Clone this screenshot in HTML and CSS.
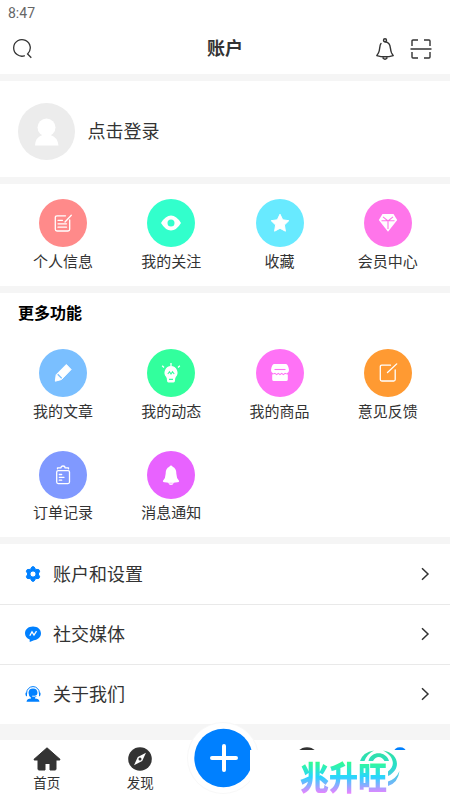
FILE: index.html
```html
<!DOCTYPE html>
<html lang="zh-CN">
<head>
<meta charset="utf-8">
<title>账户</title>
<link rel="stylesheet" href="styles.css">
</head>
<body>
<div class="app">
  <div class="status">8:47</div>
  <header class="header">
    <svg class="search" width="22" height="22" viewBox="0 0 22 22" fill="none" stroke="#333" stroke-width="1.3"><path d="M12.8 17.7A8.3 8.3 0 1 1 15.6 16L19.3 19.8"/></svg>
    <h1>账户</h1>
    <div class="actions">
      <svg width="20" height="24" viewBox="0 0 20 24" fill="none" stroke="#333" stroke-width="1.4" stroke-linecap="round" stroke-linejoin="round"><circle cx="10" cy="3.2" r="1.5"/><path d="M6 6.5C4.2 8.2 5.2 13.5 3.4 16L1.8 18.6Q10 21 18.2 18.6L16.6 16C15 13 15.9 8.9 14 6.7Q12.6 5 10 4.8M8 21Q10 23.4 12 21"/></svg>
      <svg width="22" height="22" viewBox="0 0 22 22" fill="none" stroke="#333" stroke-width="1.4"><path d="M2 8V3Q2 2 3 2H8M14 2H19Q20 2 20 3V8M2 14V19Q2 20 3 20H8M14 20H19Q20 20 20 19V14M.5 11H21.5"/></svg>
    </div>
  </header>
  <section class="profile">
    <svg width="57" height="57" viewBox="0 0 57 57"><circle cx="28.5" cy="28.5" r="28.5" fill="#ececec"/><circle cx="28.5" cy="24.5" r="9" fill="#fff"/><path d="M17 42.5Q17.5 34 24.5 32H32.5Q39.5 34 40.5 42.5Z" fill="#fff"/></svg>
    <span>点击登录</span>
  </section>
  <section class="grid quick">
    <div class="item"><i class="dot coral"><svg viewBox="0 0 20 20" class="line"><path d="M12.5 2.8H4Q2.3 2.8 2.3 4.5V16.3Q2.3 18 4 18H15Q16.7 18 16.7 16.3V7M12 9L18.3 2.2M5 7.3H9.5M5 10.8H13.5M5 14.2H13.5"/></svg></i><span>个人信息</span></div>
    <div class="item"><i class="dot teal"><svg viewBox="0 0 20 20" class="solid"><path fill-rule="evenodd" d="M0 10Q4.5 2.5 10 2.5T20 10Q15.5 17.5 10 17.5T0 10ZM10 6.5A3.5 3.5 0 1 0 10 13.5A3.5 3.5 0 1 0 10 6.5"/></svg></i><span>我的关注</span></div>
    <div class="item"><i class="dot cyan"><svg viewBox="0 0 20 20" class="solid star"><path d="M10 1.2L12.7 6.8L18.8 7.7L14.4 12L15.4 18.2L10 15.3L4.6 18.2L5.6 12L1.2 7.7L7.3 6.8Z"/></svg></i><span>收藏</span></div>
    <div class="item"><i class="dot pink"><svg viewBox="0 0 20 20"><path fill="#fff" d="M4.5 1H15.5L19.2 7L10 18.8L.8 7Z"/><path d="M5 3.8L10 8L15 3.8M3.5 7.8H16.5M10 8V16" fill="none" stroke="#ff75ea" stroke-width="1.1"/></svg></i><span>会员中心</span></div>
  </section>
  <section class="more">
    <h2>更多功能</h2>
    <div class="grid">
      <div class="item"><i class="dot blue"><svg viewBox="0 0 20 20"><path fill="#fff" stroke="#fff" stroke-linejoin="round" d="M13.3 1.5L18.1 6.5L8.5 16.5L2.3 18.2L3.2 11.7Z"/><path d="M4.7 11.3L8.7 15.2" stroke="#7abfff" stroke-width="1.2" fill="none"/></svg></i><span>我的文章</span></div>
      <div class="item"><i class="dot green"><svg viewBox="0 0 20 20"><path fill="#fff" d="M10 3A6.6 6.6 0 0 1 14.8 14Q14 15 14 17.5Q14 19.5 12.5 19.5H7.5Q6 19.5 6 17.5Q6 15 5.2 14A6.6 6.6 0 0 1 10 3"/><path d="M10 0V3M1.2 2.8L3 4.5M18.8 2.8L17 4.5" stroke="#fff" stroke-width="1.3"/><path d="M6.8 11L8.5 8.7L10 11L11.5 8.7L13.2 11M8 16.4H12" stroke="#32ff9d" stroke-width="1.1" fill="none"/></svg></i><span>我的动态</span></div>
      <div class="item"><i class="dot magenta"><svg viewBox="0 0 20 20"><path fill="#fff" d="M4 1H16Q18.2 1.5 19 7Q19 10 16.7 10.5L15 9.8L13.4 11L11.7 9.8L10 11L8.3 9.8L6.6 11L5 9.8L3.3 10.5Q1 10 1 7Q1.8 1.5 4 1ZM2.2 11.5L5 11L6.6 12.3L8.3 11L10 12.3L11.7 11L13.4 12.3L15 11L17.8 11.5V16.5Q17.8 18 16 18H4Q2.2 18 2.2 16.5Z"/><path d="M4.5 6.5H15.5" stroke="#ff72f6" stroke-width="1.1"/></svg></i><span>我的商品</span></div>
      <div class="item"><i class="dot orange"><svg viewBox="0 0 20 20" class="line"><path d="M12.5 2.2H3.8Q2.3 2.2 2.3 3.7V16.5Q2.3 18 3.8 18H15.7Q17.2 18 17.2 16.5V6.8M9.5 9.5L18.7.9"/></svg></i><span>意见反馈</span></div>
      <div class="item"><i class="dot indigo"><svg viewBox="0 0 20 20" class="line"><rect x="3.7" y="5.6" width="12.8" height="13" rx="1.5"/><path d="M4.5 3.8V2.8H8M15.5 3.8V2.8H12M8 2.8Q8 1 10 1T12 2.8M6.3 9.5H8.7M6.3 12.3H11M6.3 15.2H8.7"/></svg></i><span>订单记录</span></div>
      <div class="item"><i class="dot violet"><svg viewBox="0 0 20 20" class="solid"><path d="M8.3 1.7Q10-.5 11.7 1.7Q15.5 3.5 15.3 8.5Q15.4 13 18 15.7Q18.5 17 16.5 17.2Q14 17.5 12.7 17.7Q12.2 20 10 20T7.3 17.7Q6 17.5 3.5 17.2Q1.5 17 2 15.7Q4.6 13 4.7 8.5Q4.5 3.5 8.3 1.7"/><path d="M8.3 18.2H11.7" stroke="#e862ff" stroke-width=".5"/></svg></i><span>消息通知</span></div>
    </div>
  </section>
  <section class="rows">
    <div class="row"><svg class="lead" viewBox="0 0 16 16"><path fill="#0080ff" fill-rule="evenodd" stroke="#0080ff" stroke-linejoin="round" d="M7 .8H9L10.600 3.400L13.700 3.500L14.700 5.200L13.200 8L14.700 10.800L13.700 12.500L10.600 12.600L9 15.200H7L5.400 12.600L2.300 12.500L1.300 10.800L2.800 8L1.300 5.200L2.300 3.500L5.400 3.400ZM8 4.900A3.100 3.100 0 1 0 8 11.100A3.100 3.100 0 1 0 8 4.900"/></svg><span>账户和设置</span><svg class="chev" viewBox="0 0 10 14"><path d="M2 1.2L8 7L2 12.8"/></svg></div>
    <div class="row"><svg class="lead" viewBox="0 0 16 16"><path fill="#0080ff" d="M8 .5C12.7.5 16 3.4 16 7.3S12.9 13.8 9 14.2L4.7 16V13.6C1.7 12.5 0 10 0 7.3C0 3.4 3.3.5 8 .5"/><path d="M4.8 9.8L7 5.8L9 9L11.5 5.2" fill="none" stroke="#fff" stroke-width="1.3"/></svg><span>社交媒体</span><svg class="chev" viewBox="0 0 10 14"><path d="M2 1.2L8 7L2 12.8"/></svg></div>
    <div class="row"><svg class="lead" viewBox="0 0 16 16"><path d="M1.6 8V7A6.4 6.4 0 0 1 14.4 7V8" fill="none" stroke="#0080ff" stroke-width="1"/><path fill="#0080ff" d="M.5 6.8H2V10.5Q.5 10 .5 8.8ZM15.5 6.8H14V10.5Q15.5 10 15.5 8.8ZM8 2.5A4.5 4.5 0 0 1 12.5 6.8Q12.4 10.3 10 11.7V12.5Q14 12.5 14.5 15.8H1.5Q2 12.5 6 12.5V11.7Q3.5 10 3.5 6.8A4.5 4.5 0 0 1 8 2.5"/><path d="M7.2 10.2Q10 11 12.7 8.8" stroke="#fff" fill="none" stroke-width=".9"/></svg><span>关于我们</span><svg class="chev" viewBox="0 0 10 14"><path d="M2 1.2L8 7L2 12.8"/></svg></div>
  </section>
  <nav class="tabs">
    <div class="tab"><svg width="28" height="24" viewBox="0 0 28 24" fill="#333"><path stroke="#333" stroke-linejoin="round" d="M14 .8L27 12.3Q27.3 13 26.5 13H23V22Q23 23 22 23H17V16.5H12V23H6Q5 23 5 22V13H1.5Q.7 13 1 12.3Z"/></svg><span>首页</span></div>
    <div class="tab"><svg width="24" height="24" viewBox="0 0 24 24"><circle cx="12" cy="12" r="11.8" fill="#333"/><path fill="#fff" fill-rule="evenodd" d="M18 5.8L14.2 14L6 18.2L9.8 10ZM12 10.5A1.5 1.5 0 1 0 12 13.5A1.5 1.5 0 1 0 12 10.5"/></svg><span>发现</span></div>
    <div class="add"><svg width="72" height="72" viewBox="0 0 72 72"><circle cx="36" cy="36" r="35.5" fill="#fff" stroke="#f8f8f8"/><circle cx="36.5" cy="36" r="29.2" fill="#0080ff"/><path d="M37 24V48M25 36H49" stroke="#fff" stroke-width="4" stroke-linecap="round"/></svg></div>
    <div class="tab"><svg width="24" height="24" viewBox="0 0 24 24"><circle cx="12" cy="12" r="11.8" fill="#333"/></svg></div>
    <div class="tab"><svg width="24" height="24" viewBox="0 0 24 24"><path fill="#0080ff" d="M12 .2Q17.5.2 19 6V12H5V6Q6.5.2 12 .2"/></svg></div>
    <div class="brand">
      <svg class="waves" width="42" height="38" viewBox="0 0 42 38">
        <defs><linearGradient id="wave" gradientUnits="userSpaceOnUse" x1="0" y1="0" x2="0" y2="36"><stop stop-color="#32e0a0"/><stop offset=".45" stop-color="#28dfca"/><stop offset="1" stop-color="#7bb0ff"/></linearGradient></defs>
        <g fill="url(#wave)"><path d="M1 11Q4 2 15 .5Q8 4 5.5 11Z"/><path d="M9.500 11C12 .8 27 .8 30 11H25.500C22.500 5.500 17 5.500 14 11Z"/><path d="M24 .5C40 3 43 19 29 26V21.5C37 16 35 6 24 .5Z"/><path d="M40.5 21Q39 33 29 36V31.5Q37 29 40.5 21Z"/></g>
      </svg>
      <b>兆升旺</b>
    </div>
  </nav>
</div>
</body>
</html>
```
FILE: styles.css
```css
* { box-sizing: border-box; }
body { margin: 0; font-family: "Noto Sans CJK SC", sans-serif; color: #333; }
.app { width: 450px; height: 800px; background: #f5f5f5; overflow: hidden; display: flex; flex-direction: column; }
svg { display: block; flex: none; }
.status { height: 26px; padding-left: 8px; background: #fff; font: 14px/26px Roboto, sans-serif; color: #666; }
.header { height: 48px; background: #fff; display: grid; grid-template-columns: 1fr auto 1fr; align-items: center; padding: 0 18px 2px 12px; }
.header h1 { margin: 0 0 4px 6px; font-size: 18px; line-height: 24px; font-weight: 700; }
.actions { display: flex; justify-content: flex-end; align-items: center; gap: 15px; }
.profile { margin-top: 7px; height: 96px; background: #fff; display: flex; align-items: center; gap: 12.5px; padding: 5px 18px 0; font-size: 18px; }
.profile span { margin-top: -3px; }
.grid { display: grid; grid-template-columns: repeat(4, 1fr); padding: 0 8px 0 9px; row-gap: 29px; }
.quick { margin-top: 7px; height: 102px; padding-top: 15px; background: #fff; }
.item { height: 72.5px; display: flex; flex-direction: column; align-items: center; gap: 2.5px; font-size: 15px; line-height: 22px; }
.dot { width: 48px; height: 48px; flex: none; border-radius: 50%; display: flex; align-items: center; justify-content: center; }
.dot svg { width: 20px; height: 20px; }
.line { fill: none; stroke: #fff; stroke-width: 1.3; stroke-linecap: round; stroke-linejoin: round; }
.solid { fill: #fff; }
.star { stroke: #fff; stroke-linejoin: round; }
.coral { background: #ff8a8a; }
.teal { background: #32ffcc; }
.cyan { background: #68eaff; }
.pink { background: #ff75ea; }
.blue { background: #7abfff; }
.green { background: #32ff9d; }
.magenta { background: #ff72f6; }
.orange { background: #ff9a32; }
.indigo { background: #8099ff; }
.violet { background: #e862ff; }
.more { margin-top: 7px; height: 244px; background: #fff; }
.more h2 { margin: 0; height: 56.4px; padding: 7px 18px 0; font-size: 16px; line-height: 24px; color: #000; }
.rows { margin-top: 7px; background: #fff; }
.row { height: 60px; display: flex; align-items: center; padding: 0 20px 0 25px; font-size: 18px; }
.row + .row { box-shadow: inset 0 1px #e9e9e9; }
.row span { flex: 1; margin: -2px 0 0 12px; }
.lead { width: 16px; height: 16px; }
.chev { width: 10px; height: 14px; fill: none; stroke: #333; stroke-width: 1.5; }
.tabs { position: relative; margin-top: 16px; height: 60px; background: #fff; display: grid; grid-template-columns: 93.5px 93.5px 73px 93.5px 93.5px; }
.tab { display: flex; flex-direction: column; align-items: center; padding-top: 7px; gap: 1px; font-size: 13.5px; line-height: 20px; }
.add { margin-top: -18px; }
.brand { position: absolute; left: 250px; top: 10px; width: 200px; height: 50px; background: #fff; }
.brand b { position: absolute; left: 50px; top: 7px; font-size: 29px; line-height: 36px; font-weight: 900; white-space: nowrap; color: transparent; background: linear-gradient(#32ff8b 16%, #28d5ff 55%, #ed82ff 96%); background-clip: text; -webkit-background-clip: text; transform: scaleY(1.12); }
.waves { position: absolute; left: 109px; top: 0; }
```
